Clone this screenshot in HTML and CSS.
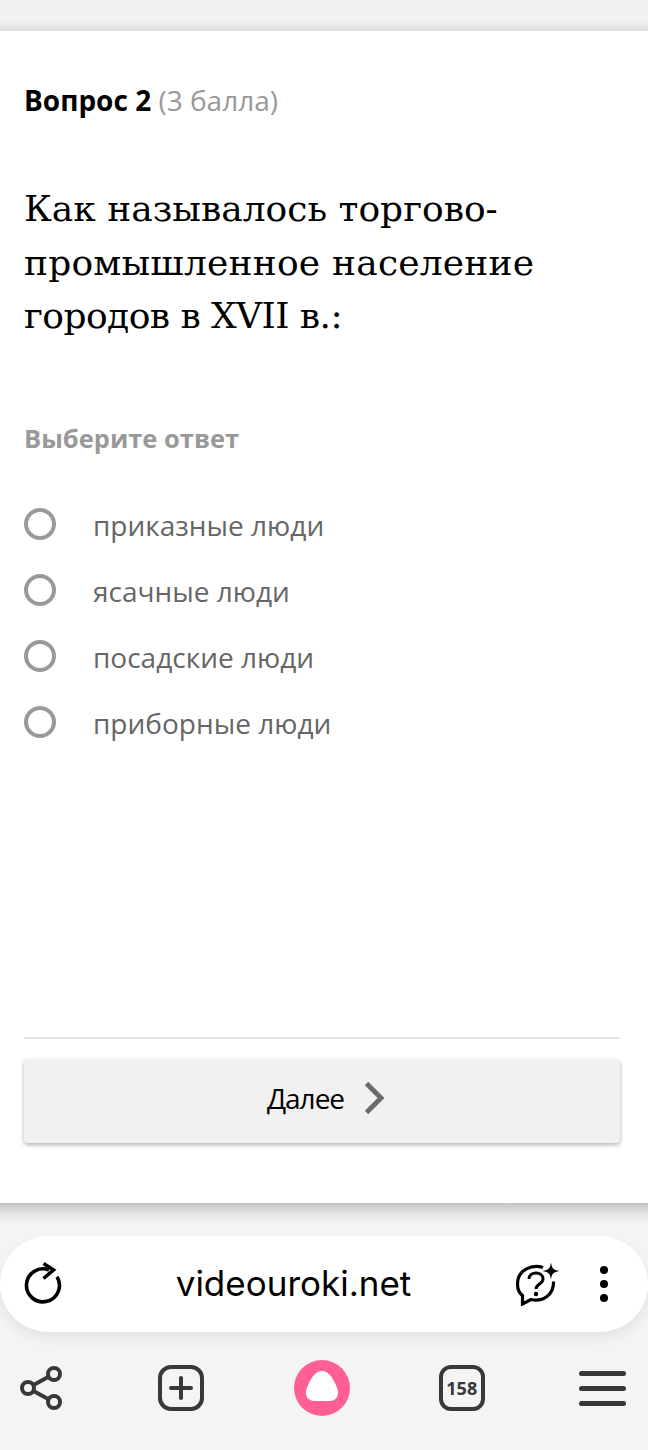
FILE: index.html
```html
<!DOCTYPE html>
<html>
  <head>
    <meta name="viewport" content="width=device-width, initial-scale=1.0">
    <meta charset="utf-8">
    <title>Вопрос 2</title>
    <link rel="stylesheet" href="styles.css">
  </head>

  <body>
    <div class="topBand"></div>

    <div class="card">
      <div class="qHead"><b>Вопрос 2</b> <span>(3 балла)</span></div>
      <h1 class="qText">Как называлось торгово-<br><span class="lineTwo">промышленное население</span><br><span class="lineThree">городов в XVII в.:</span></h1>
      <div class="qHint">Выберите ответ</div>

      <div class="answers">
        <div class="answer"><i class="radio"></i><span>приказные люди</span></div>
        <div class="answer"><i class="radio"></i><span>ясачные люди</span></div>
        <div class="answer"><i class="radio"></i><span>посадские люди</span></div>
        <div class="answer"><i class="radio"></i><span>приборные люди</span></div>
      </div>

      <div class="cardFoot">
        <div class="nextBtn">
          <span>Далее</span>
          <svg width="20" height="34" viewBox="0 0 20 34"><path d="M2.500 2.500 L17 17 L2.500 31.500" fill="none" stroke="#6b6b6b" stroke-width="4.800"/></svg>
        </div>
      </div>
    </div>
    <div class="cardShadow"></div>

    <div class="browser">
      <div class="urlBar">
        <svg class="reload" width="40" height="46" viewBox="0 0 40 46">
          <path d="M31 11.700 A16.500 16.500 0 1 1 23 5" fill="none" stroke="#000" stroke-width="3.600"/>
          <path d="M17.500 -1.500 L27.500 5 L17.500 13.500" fill="none" stroke="#000" stroke-width="3.600"/>
        </svg>
        <div class="url">videouroki.net</div>
        <svg class="ask" width="44" height="44" viewBox="0 0 44 44">
          <path d="M27 5.500 C17 2 1.500 7 1.500 22 C1.500 27 3 31 6.500 33.500 L6.500 42 L15 37.500 C27 40 38 33 37.500 19.500" fill="none" stroke="#000" stroke-width="3.200"/>
          <path d="M35 0.500 C36 6.500 37 7.500 43.500 9 C37 10.500 36 11.500 35 17.500 C34 11.500 33 10.500 26.500 9 C33 7.500 34 6.500 35 0.500 Z" fill="#000"/>
          <path d="M13 17 C13 9 27 9 27 17 C27 22 20 22 20 27" fill="none" stroke="#000" stroke-width="3"/>
          <circle cx="20" cy="32" r="2.200" fill="#000"/>
        </svg>
        <div class="dots"><i></i><i></i><i></i></div>
      </div>

      <div class="navBar">
        <div class="navItem">
          <svg width="44" height="46" viewBox="0 0 44 46">
            <circle cx="35" cy="9" r="6" fill="none" stroke="#383838" stroke-width="4"/>
            <circle cx="9" cy="23" r="6" fill="none" stroke="#383838" stroke-width="4"/>
            <circle cx="35" cy="37" r="6" fill="none" stroke="#383838" stroke-width="4"/>
            <path d="M14.500 20 L30 11.500 M14.500 26 L30 34.500" stroke="#383838" stroke-width="4"/>
          </svg>
        </div>
        <div class="navItem">
          <svg width="46" height="46" viewBox="0 0 46 46">
            <rect x="2" y="2" width="42" height="42" rx="11" fill="none" stroke="#383838" stroke-width="4"/>
            <path d="M13 23 H33 M23 13 V33" stroke="#383838" stroke-width="4" stroke-linecap="round"/>
          </svg>
        </div>
        <div class="navItem">
          <svg width="56" height="56" viewBox="0 0 56 56">
            <circle cx="28" cy="28" r="28" fill="#ff5f96"/>
            <path d="M28 11 C34 11 38 17 41 23 C44 29 45 33 43 37 C40 42 34 41 28 41 C22 41 16 42 13 37 C11 33 12 29 15 23 C18 17 22 11 28 11 Z" fill="#fff"/>
          </svg>
        </div>
        <div class="navItem"><div class="tabs">158</div></div>
        <div class="navItem"><div class="burger"><i></i><i></i><i></i></div></div>
      </div>
    </div>
  </body>
</html>
```

FILE: styles.css
```css
html,body{
  margin: 0px;
  padding: 0px;
  width: 648px;
  height: 1450px;
  overflow: hidden;
}

body{
  font-family: "Open Sans", sans-serif;
  background-color: #f4f4f4;
  display: flex;
  flex-direction: column;
}

.topBand{
  height: 31px;
  flex: none;
  background: linear-gradient(#f1f1f1 0%, #f0f0f0 70%, #dcdcdc 100%);
}

.card{
  height: 1172px;
  flex: none;
  box-sizing: border-box;
  background-color: #FFF;
  padding: 0px 28px 0px 24px;
  display: flex;
  flex-direction: column;
}

.cardShadow{
  height: 18px;
  flex: none;
  background: linear-gradient(#c4c4c4 0%, #e4e4e4 60%, #f0f0f0 100%);
}

.qHead{
  margin-top: 51px;
  font-size: 28px;
  line-height: 36px;
  color: #999;
}

.qHead b{
  color: #000;
}

.qText{
  margin: 64px 0px 0px 0px;
  font-family: "DejaVu Serif", serif;
  font-weight: normal;
  font-size: 36px;
  line-height: 53.5px;
  color: #000;
}

.lineTwo{
  letter-spacing: 0.2px;
}

.lineThree{
  letter-spacing: -0.55px;
}

.qHint{
  margin-top: 79.500px;
  font-size: 25.5px;
  line-height: 32px;
  font-weight: bold;
  color: #999;
}

.answers{
  margin-top: 53px;
  display: flex;
  flex-direction: column;
  gap: 30px;
}

.answer{
  height: 36px;
  display: flex;
  align-items: center;
  font-size: 28px;
  color: #666;
}

.radio{
  box-sizing: border-box;
  width: 32px;
  height: 32px;
  border: 4px solid #999;
  border-radius: 50%;
  margin-right: 37px;
  margin-top: -2px;
  flex: none;
}

.cardFoot{
  margin-top: auto;
  margin-bottom: 60px;
  border-top: 2px solid #e6e6e6;
  padding-top: 20px;
}

.nextBtn{
  height: 84px;
  box-sizing: border-box;
  padding: 0px 0px 6px 7px;
  background-color: #f1f1f1;
  border-radius: 4px;
  box-shadow: 0px 2px 4px rgba(0,0,0,0.3);
  display: flex;
  align-items: center;
  justify-content: center;
  gap: 20px;
  font-size: 28px;
  letter-spacing: -1px;
  color: #000;
}

.browser{
  flex: 1;
  padding-top: 15px;
}

.urlBar{
  height: 96px;
  background-color: #FFF;
  border-radius: 48px;
  box-shadow: 0px 6px 14px rgba(0,0,0,0.07);
  display: flex;
  align-items: center;
  padding: 0px 40px 0px 24px;
}

.reload{
  flex: none;
  overflow: visible;
  margin: 7px 0px 0px 2px;
}

.url{
  flex: 1;
  text-align: center;
  font-family: "Inter", sans-serif;
  font-size: 35px;
  color: #000;
  padding: 0px 0px 3px 5px;
}

.ask{
  flex: none;
  margin-right: 40px;
}

.dots{
  display: flex;
  flex-direction: column;
  gap: 6px;
}

.dots i{
  width: 8px;
  height: 8px;
  background-color: #000;
  border-radius: 50%;
}

.navBar{
  display: flex;
  align-items: center;
  justify-content: space-between;
  padding: 0px 18px 0px 13px;
  margin-top: 28px;
  height: 56px;
}

.navItem{
  width: 56px;
  height: 56px;
  display: flex;
  align-items: center;
  justify-content: center;
}

.tabs{
  box-sizing: border-box;
  width: 46px;
  height: 46px;
  border: 4px solid #383838;
  border-radius: 12px;
  display: flex;
  align-items: center;
  justify-content: center;
  font-size: 18px;
  font-weight: bold;
  color: #383838;
}

.burger{
  display: flex;
  flex-direction: column;
  gap: 10px;
}

.burger i{
  display: block;
  width: 47px;
  height: 5px;
  border-radius: 3px;
  background-color: #383838;
}
```
